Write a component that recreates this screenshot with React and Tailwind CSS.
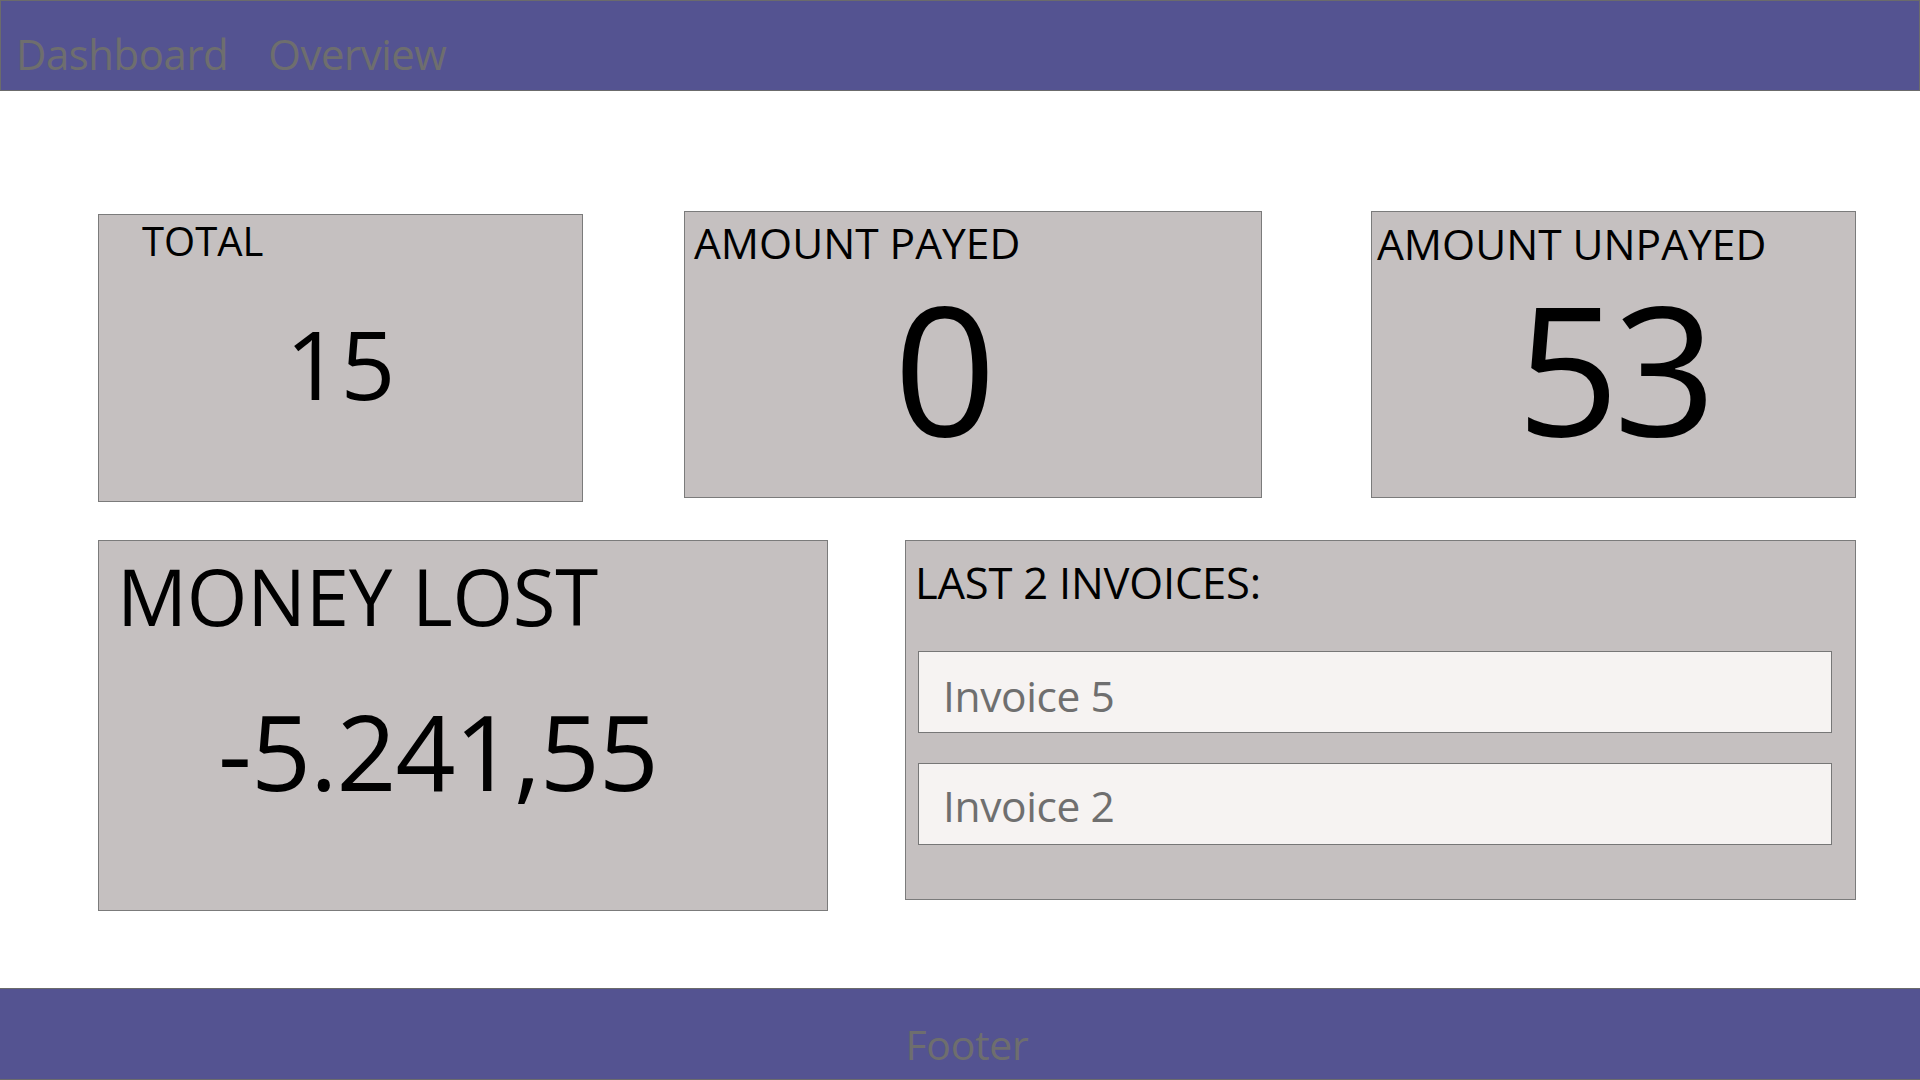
import React from 'react';

const invoices = ['Invoice 5', 'Invoice 2'];

export default function App() {
  return (
    <div className="h-screen flex flex-col bg-white font-['Open_Sans','Noto_Sans',sans-serif] overflow-hidden">
      <header className="h-[91px] shrink-0 bg-[#545391] border border-[#6b6b6b] flex items-start gap-[40px] pl-[15px] pt-[32px] text-[42px] leading-none text-[#6e6e6e] tracking-[-0.5px]">
        <span>Dashboard</span>
        <span>Overview</span>
      </header>

      <main className="flex-1 flex flex-col pl-[98px]">
        <div className="flex items-start mt-[120px]">
          <div className="w-[485px] h-[288px] mt-[3px] bg-[#c5c0c0] border border-[#7b7b7b] flex flex-col pt-[6px] pl-[43px]">
            <div className="text-[40px] leading-none">TOTAL</div>
            <div className="text-[96px] leading-none mt-[54px] text-center pr-[43px]">15</div>
          </div>

          <div className="w-[578px] h-[287px] ml-[101px] bg-[#c5c0c0] border border-[#7b7b7b] flex flex-col pt-[10px] pl-[9px]">
            <div className="text-[42.5px] leading-none">AMOUNT PAYED</div>
            <div className="text-[180px] leading-none mt-[12px] text-center pr-[65px]">0</div>
          </div>

          <div className="w-[485px] h-[287px] ml-[109px] bg-[#c5c0c0] border border-[#7b7b7b] flex flex-col pt-[11px] pl-[5px]">
            <div className="text-[42.5px] leading-none">AMOUNT UNPAYED</div>
            <div className="text-[180px] leading-none mt-[11px] text-center pr-[5px] tracking-[-6px]">53</div>
          </div>
        </div>

        <div className="flex items-start mt-[38px]">
          <div className="w-[730px] h-[371px] bg-[#c5c0c0] border border-[#7b7b7b] flex flex-col pt-[16px] pl-[18px]">
            <div className="text-[78px] leading-none tracking-[-0.3px]">MONEY LOST</div>
            <div className="text-[105px] leading-none mt-[63px] text-center pr-[68px] tracking-[-1px]">-5.241,55</div>
          </div>

          <div className="w-[951px] h-[360px] ml-[77px] bg-[#c5c0c0] border border-[#7b7b7b] flex flex-col pt-[20px]">
            <div className="text-[43.5px] leading-none pl-[9px] tracking-[-0.2px]">LAST 2 INVOICES:</div>
            <div className="flex flex-col gap-[30px] mt-[46px] ml-[12px] w-[914px]">
              {invoices.map((inv, i) => (
                <div
                  key={inv}
                  className={`h-[82px] bg-[#f6f3f2] border border-[#777777] pl-[24px] text-[42.5px] leading-none text-[#6f6f6f] tracking-[-0.4px] ${
                    i === 0 ? 'pt-[23px]' : 'pt-[21px]'
                  }`}
                >
                  {inv}
                </div>
              ))}
            </div>
          </div>
        </div>
      </main>

      <footer className="h-[92px] shrink-0 bg-[#545391] border-t border-b border-[#6b6b6b] pt-[35px] text-center text-[41px] leading-none text-[#6e6e6e] tracking-[-0.3px]">
        <span className="pl-[14px]">Footer</span>
      </footer>
    </div>
  );
}
